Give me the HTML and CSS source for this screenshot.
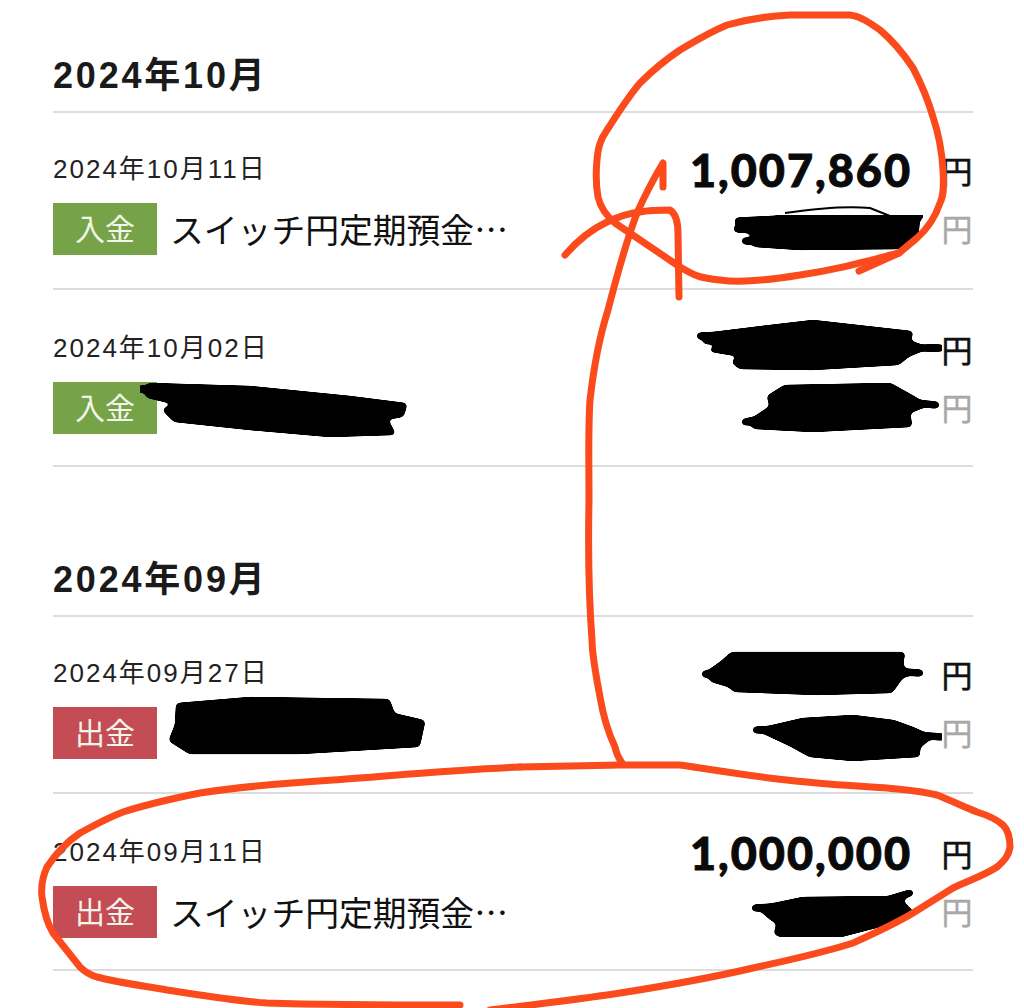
FILE: index.html
```html
<!DOCTYPE html>
<html lang="ja">
<head>
  <meta charset="UTF-8" />
  <title>入出金履歴</title>
  <link rel="stylesheet" href="styles.css">
</head>
<body>
  <div class="page">

    <section class="month">
      <h2 class="month-title">2024年10月</h2>
      <div class="row">
        <div class="row-left">
          <div class="date">2024年10月11日</div>
          <div class="tx"><span class="tag tag-in">入金</span><span class="tx-name">スイッチ円定期預金…</span></div>
        </div>
        <div class="row-right">
          <div class="amount"><span class="num">1,007,860</span><span class="yen">円</span></div>
          <div class="balance"><span class="yen">円</span></div>
        </div>
      </div>
      <div class="row">
        <div class="row-left">
          <div class="date">2024年10月02日</div>
          <div class="tx"><span class="tag tag-in">入金</span></div>
        </div>
        <div class="row-right">
          <div class="amount"><span class="yen">円</span></div>
          <div class="balance"><span class="yen">円</span></div>
        </div>
      </div>
    </section>

    <section class="month month-next">
      <h2 class="month-title">2024年09月</h2>
      <div class="row">
        <div class="row-left">
          <div class="date">2024年09月27日</div>
          <div class="tx"><span class="tag tag-out">出金</span></div>
        </div>
        <div class="row-right">
          <div class="amount"><span class="yen">円</span></div>
          <div class="balance"><span class="yen">円</span></div>
        </div>
      </div>
      <div class="row">
        <div class="row-left">
          <div class="date">2024年09月11日</div>
          <div class="tx"><span class="tag tag-out">出金</span><span class="tx-name">スイッチ円定期預金…</span></div>
        </div>
        <div class="row-right">
          <div class="amount"><span class="num">1,000,000</span><span class="yen">円</span></div>
          <div class="balance"><span class="yen">円</span></div>
        </div>
      </div>
    </section>

  </div>

  <!-- hand drawn marks on top of the screenshot -->
  <svg class="marks" width="1024" height="1008" viewBox="0 0 1024 1008">
    <defs>
      <filter id="soften" x="0" y="0" width="100%" height="100%">
        <feGaussianBlur stdDeviation="2.2"/>
        <feColorMatrix type="matrix" values="0 0 0 0 0  0 0 0 0 0  0 0 0 0 0  0 0 0 10 -4"/>
      </filter>
    </defs>
    <g class="ink" filter="url(#soften)">
      <polygon points="746,222 790,216 880,215 918,218 916,240 905,247 800,248 755,245 760,238 750,232 760,228"/>
      <polygon points="705,335 770,327 813,322 911,333 908,342 925,348 908,355 898,363 813,368 740,367 734,362 742,355 712,350 725,343 705,342"/>
      <polygon points="750,422 772,407 769,397 785,387 890,385 908,395 925,405 908,412 910,425 813,430 755,427"/>
      <polygon points="145,388 150,385 250,388 350,398 405,405 402,415 385,418 393,433 330,435 250,428 175,420 165,410 178,403 148,396"/>
      <polygon points="708,673 722,663 732,654 903,654 901,663 903,670 910,673 901,677 891,691 817,693 735,690 729,685 712,680"/>
      <polygon points="760,730 803,720 853,717 893,722 915,730 930,737 918,747 918,755 853,759 810,755 792,745 777,738"/>
      <polygon points="178,705 250,699 388,701 393,715 423,722 418,745 300,752 190,752 171,740 177,725"/>
      <polygon points="760,908 803,899 893,898 905,895 901,902 912,913 887,923 837,936 787,937 776,933 779,923 770,917"/>
      <path class="ink-stroke" d="M738,221 L800,218 M737,229 L790,230 M745,241 L800,242 M890,218 L920,216 M700,336 L760,334 M925,348 L941,348 M745,422 L790,414 M915,403 L936,405 M140,389 L200,392 M170,412 L240,418 M705,674 L760,672 M905,672 L920,673 M756,730 L820,728 M915,735 L942,737 M755,908 L810,905 M890,899 L910,893"/>
    </g>
    <path class="ink-line" d="M785,213 Q840,205 870,208 L895,218"/>
    <g class="pen">
      <path d="M899,253 C860,263 835,270 800,275 C770,280 740,283 720,280 C700,278 695,276 680,267 L615,223 C605,215 600,205 598,197 C595,180 596,170 597,160 C598,148 600,140 607,130 C618,113 628,97 640,83 C652,71 665,60 680,50 C695,41 710,32 727,25 C748,19 770,16 790,15 L850,15 C860,16 870,23 880,30 C892,40 903,53 913,68 C922,85 928,100 933,117 C939,135 942,152 943,170 C944,185 944,195 940,203 C935,218 926,230 917,238 L899,253"/>
      <path d="M859,271 L899,253"/>
      <path d="M565,255 C578,240 590,230 607,222 C620,216 630,213 640,212 C650,210 660,210 670,210 C676,214 678,222 678,233 L679,297"/>
      <path d="M622,763 C618,757 616,752 615,747 C607,730 603,715 600,697 C595,670 592,655 592,640 C589,600 588,550 589,500 C589,460 588,430 590,400 C594,365 600,335 608,310 C617,275 626,242 637,213 C645,195 654,178 663,163 L663,187"/>
      <path d="M520,767 C450,770 390,776 333,780 C285,783 240,787 200,793 C170,799 145,805 123,812 C105,819 93,826 80,833 C65,843 55,855 47,867 C42,878 41,888 42,897 C44,912 47,923 53,933 L80,967 C86,973 90,975 97,977 C120,983 145,986 167,990 C200,995 235,1001 267,1003 C330,1005 400,1005 460,1005"/>
      <path d="M490,1010 C530,1005 575,1000 620,993 C665,986 710,978 753,968 C790,960 822,953 853,943 C875,933 895,924 913,913 L953,888 C970,880 985,875 997,867 C1005,860 1009,855 1010,847 C1010,838 1008,830 1003,825 C995,818 987,815 977,812 C962,806 950,800 937,795 C920,791 905,790 887,788 C855,786 820,784 787,780 C750,776 715,770 680,765 L620,765 L520,767"/>
    </g>
  </svg>
</body>
</html>
```

FILE: styles.css
```css
* {
  box-sizing: border-box;
  margin: 0;
  padding: 0;
}

body {
  position: relative;
  width: 1024px;
  height: 1008px;
  overflow: hidden;
  background: #fff;
  color: #111;
  font-family: "Liberation Sans", "Noto Sans CJK JP", sans-serif;
}

.page {
  padding: 0 51px 0 53px;
}

.month-title {
  height: 113px;
  padding-top: 52px;
  border-bottom: 2px solid #ddd;
  font-size: 36px;
  line-height: 48px;
  letter-spacing: 2.8px;
  font-weight: bold;
  color: #1a1a1a;
}

.month-next {
  padding-top: 37px;
}

.row {
  display: flex;
  justify-content: space-between;
  height: 177px;
  padding-top: 41px;
  border-bottom: 2px solid #ddd;
}

.row:first-of-type {
  padding-top: 39px;
}

.date {
  height: 51px;
  font-size: 26px;
  line-height: 34px;
  letter-spacing: 2px;
  color: #222;
}

.tx {
  display: flex;
  align-items: center;
  gap: 13px;
}

.tag {
  width: 104px;
  height: 52px;
  color: #f2f5ea;
  font-size: 30px;
  line-height: 54px;
  text-align: center;
}

.tag-in {
  background: #76a347;
}

.tag-out {
  background: #c44c55;
}

.tx-name {
  font-family: "Noto Sans CJK JP", sans-serif;
  font-size: 33.8px;
  line-height: 52px;
  color: #111;
}

.row-right {
  display: flex;
  flex-direction: column;
  align-items: flex-end;
}

.amount,
.balance {
  display: flex;
  align-items: center;
  justify-content: flex-end;
  height: 60px;
}

.amount {
  height: 42px;
  margin-bottom: 7px;
}

.num {
  font-family: Lato, "Liberation Sans", sans-serif;
  font-weight: 900;
  font-size: 45px;
  letter-spacing: 2px;
  margin-right: 29px;
  padding-bottom: 7px;
  color: #0a0a0a;
  -webkit-text-stroke: 0.9px #0a0a0a;
}

.yen {
  width: 32px;
  font-size: 31px;
  line-height: 42px;
  text-align: center;
}

.amount .yen {
  -webkit-text-stroke: 0.6px #111;
}

.balance .yen {
  color: #a8a8a8;
  -webkit-text-stroke: 0.4px #a8a8a8;
}

.marks {
  position: absolute;
  top: 0;
  left: 0;
}

.ink polygon {
  fill: #000;
  stroke: #000;
  stroke-width: 4;
  stroke-linejoin: round;
}

.ink-stroke {
  fill: none;
  stroke: #000;
  stroke-width: 7;
  stroke-linecap: round;
}

.ink-line {
  fill: none;
  stroke: #000;
  stroke-width: 2;
}

.pen path {
  fill: none;
  stroke: #fb4a1c;
  stroke-width: 7;
  stroke-linecap: round;
  stroke-linejoin: round;
}
```
